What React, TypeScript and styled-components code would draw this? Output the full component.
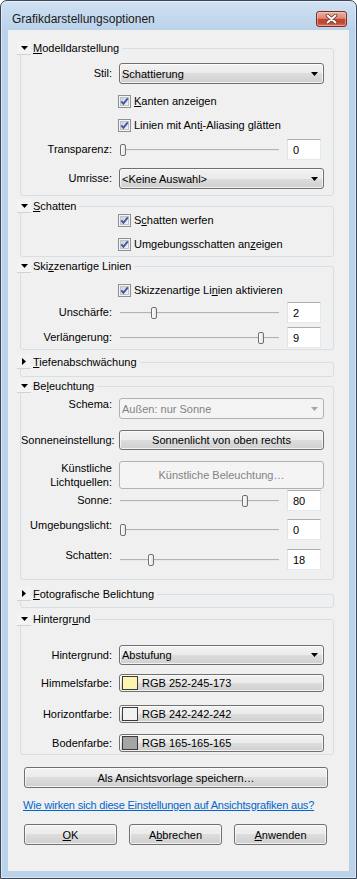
import React from "react";
import styled, { createGlobalStyle } from "styled-components";

const GlobalStyle = createGlobalStyle`
  html, body { margin: 0; padding: 0; background: #ffffff; }
  body {
    font-family: "Liberation Sans", Arial, sans-serif;
    font-size: 11px;
    color: #000;
  }
  * { box-sizing: border-box; }
`;

const Window = styled.div`
  width: 357px;
  height: 879px;
  border: 1px solid #3b4756;
  border-radius: 7px 7px 0 0;
  background: linear-gradient(#d0e1f2, #bad2ea 30px, #bad2ea);
  box-shadow: inset 0 0 0 1px rgba(255, 255, 255, 0.45);
  padding: 0 7px 7px 7px;
  display: flex;
  flex-direction: column;
`;

const TitleBar = styled.div`
  height: 29px;
  padding: 6px 2px 0 4px;
  display: flex;
  align-items: center;
  justify-content: space-between;
`;

const Title = styled.span`
  font-size: 12px;
  color: #1a1a1a;
`;

const CloseButton = styled.div`
  width: 31px;
  height: 16px;
  border: 1px solid #7a2e23;
  border-radius: 3px;
  background: linear-gradient(#eab3a3 0%, #d98873 45%, #c6462e 52%, #c24630 78%, #d87a62 100%);
  box-shadow: inset 0 0 0 1px rgba(255, 220, 210, 0.45);
  display: flex;
  align-items: center;
  justify-content: center;
`;

const Client = styled.div`
  flex: 1;
  background: #f0f0f0;
  padding: 11px 15px 0 9px;
  display: flex;
  flex-direction: column;
`;

const Section = styled.div<{ $mt: number }>`
  margin-top: ${(p) => p.$mt}px;
`;

const SectionHeader = styled.div`
  position: relative;
  z-index: 1;
  height: 14px;
  display: flex;
  align-items: center;
  gap: 2px;
`;

const Toggle = styled.div`
  width: 14px;
  height: 14px;
  background: #f3f3f3;
  border-bottom: 1px solid #d2d2d2;
  display: flex;
  align-items: center;
  justify-content: center;
`;

const HeaderLabel = styled.span`
  background: #f0f0f0;
  padding-right: 3px;
  line-height: 14px;
`;

const SectionBox = styled.div<{ $pb?: number; $min?: number }>`
  margin: -7px 0 0 3px;
  border: 1px solid #d5dfe5;
  border-radius: 3px;
  padding: 0 9px ${(p) => p.$pb ?? 0}px 0;
  min-height: ${(p) => (p.$min ? p.$min + 2 : 0)}px;
`;

const Row = styled.div<{ $mt: number; $h: number }>`
  display: grid;
  grid-template-columns: 91px 1fr;
  column-gap: 7px;
  align-items: center;
  height: ${(p) => p.$h}px;
  margin-top: ${(p) => p.$mt}px;
`;

const Label = styled.div<{ $align?: "start" | "center" }>`
  text-align: right;
  line-height: 13px;
  align-self: ${(p) => (p.$align === "start" ? "start" : "center")};
`;

const TwoLineLabel = styled(Label)`
  line-height: 14px;
`;

const Select = styled.div<{ $disabled?: boolean }>`
  grid-column: 2;
  height: 100%;
  border: 1px solid ${(p) => (p.$disabled ? "#adb2b5" : "#707070")};
  border-radius: 3px;
  background: ${(p) =>
    p.$disabled
      ? "#f4f4f4"
      : "linear-gradient(#f2f2f2 0%, #ebebeb 50%, #dddddd 50%, #cfcfcf 100%)"};
  box-shadow: ${(p) => (p.$disabled ? "none" : "inset 0 0 0 1px rgba(255,255,255,0.7)")};
  color: ${(p) => (p.$disabled ? "#838383" : "#000")};
  display: flex;
  align-items: center;
  justify-content: space-between;
  padding: 0 5px 0 2px;
`;

const PushButton = styled.div<{ $disabled?: boolean }>`
  height: 100%;
  border: 1px solid ${(p) => (p.$disabled ? "#adb2b5" : "#707070")};
  border-radius: 3px;
  background: ${(p) =>
    p.$disabled
      ? "#f4f4f4"
      : "linear-gradient(#f2f2f2 0%, #ebebeb 50%, #dddddd 50%, #cfcfcf 100%)"};
  box-shadow: ${(p) => (p.$disabled ? "none" : "inset 0 0 0 1px rgba(255,255,255,0.7)")};
  color: ${(p) => (p.$disabled ? "#838383" : "#000")};
  display: flex;
  align-items: center;
  justify-content: center;
`;

const ColorButton = styled(PushButton)`
  justify-content: flex-start;
  padding-left: 2px;
  gap: 4px;
`;

const Swatch = styled.div<{ $color: string }>`
  width: 16px;
  height: 14px;
  border: 1px solid #3a3a3a;
  background: ${(p) => p.$color};
`;

const CheckLine = styled.div`
  grid-column: 2;
  margin-left: -1px;
  display: flex;
  align-items: center;
  gap: 3px;
  line-height: 13px;
`;

const SliderControl = styled.div`
  height: 100%;
  display: flex;
  align-items: center;
  gap: 8px;
  padding: 0 3px 0 1px;
`;

const Track = styled.div`
  flex: 1;
  position: relative;
  height: 12px;
`;

const Rail = styled.div`
  position: absolute;
  left: 0;
  right: 0;
  top: 5px;
  height: 2px;
  border-top: 1px solid #b3b3b3;
  background: #e8e8e8;
`;

const Thumb = styled.div`
  position: absolute;
  top: 0;
  width: 6px;
  height: 12px;
  border: 1px solid #707070;
  border-radius: 2px;
  background: linear-gradient(90deg, #ffffff, #e2e2e2);
`;

const NumberBox = styled.div`
  width: 34px;
  height: 100%;
  background: #ffffff;
  border: 1px solid #e3e9ef;
  border-top-color: #abadb3;
  border-left-color: #e2e3ea;
  padding-left: 5px;
  display: flex;
  align-items: center;
`;

const SaveButton = styled(PushButton)`
  margin: 12px 0 0 7px;
  width: 304px;
  height: 21px;
`;

const HelpLink = styled.a`
  margin: 10px 0 0 6px;
  line-height: 14px;
  letter-spacing: -0.2px;
  color: #0066cc;
  text-decoration: underline;
  cursor: pointer;
`;

const ButtonBar = styled.div`
  margin: 12px 0 0 7px;
  display: flex;
  gap: 12px;
`;

const DialogButton = styled(PushButton)`
  width: 93px;
  height: 21px;
`;

const U = styled.span`
  text-decoration: underline;
`;

const DownArrow = ({ color = "#000" }: { color?: string }) => (
  <svg width="7" height="4" viewBox="0 0 7 4">
    <path d="M0 0H7L3.5 4Z" fill={color} />
  </svg>
);

const RightArrow = () => (
  <svg width="4" height="7" viewBox="0 0 4 7">
    <path d="M0 0L4 3.5L0 7Z" fill="#000" />
  </svg>
);

const CheckIcon = () => (
  <svg width="13" height="13" viewBox="0 0 13 13">
    <defs>
      <linearGradient id="cbg" x1="0" y1="0" x2="1" y2="1">
        <stop offset="0" stopColor="#c9cdd2" />
        <stop offset="1" stopColor="#f6f6f6" />
      </linearGradient>
    </defs>
    <rect x="0.5" y="0.5" width="12" height="12" fill="#f4f4f4" stroke="#8e8f8f" />
    <rect x="2.5" y="2.5" width="8" height="8" fill="url(#cbg)" stroke="#c0c4c8" />
    <path d="M3.3 6.4L5.4 8.8L9.8 3.4" fill="none" stroke="#3a56a4" strokeWidth="1.9" />
  </svg>
);

const CloseIcon = () => (
  <svg width="13" height="10" viewBox="0 0 13 10">
    <path d="M2.5 1.5L10.5 8.5M10.5 1.5L2.5 8.5" stroke="#5a3a34" strokeWidth="3.6" strokeLinecap="round" />
    <path d="M2.5 1.5L10.5 8.5M10.5 1.5L2.5 8.5" stroke="#ffffff" strokeWidth="2" strokeLinecap="round" />
  </svg>
);

type HeaderProps = { open: boolean; children: React.ReactNode };
const Header = ({ open, children }: HeaderProps) => (
  <SectionHeader>
    <Toggle>{open ? <DownArrow /> : <RightArrow />}</Toggle>
    <HeaderLabel>{children}</HeaderLabel>
  </SectionHeader>
);

type SliderProps = {
  mt: number;
  label: string;
  value: number;
  max: number;
  align?: "start" | "center";
};
// track runs 159px, the thumb 6px: thumb left = value share of 153px
const SliderRow = ({ mt, label, value, max, align }: SliderProps) => (
  <Row $mt={mt} $h={21}>
    <Label $align={align}>{label}</Label>
    <SliderControl>
      <Track>
        <Rail />
        <Thumb style={{ left: Math.round((value / max) * 153) }} />
      </Track>
      <NumberBox>{value}</NumberBox>
    </SliderControl>
  </Row>
);

const Check = ({ mt, children }: { mt: number; children: React.ReactNode }) => (
  <Row $mt={mt} $h={13}>
    <CheckLine>
      <CheckIcon />
      <span>{children}</span>
    </CheckLine>
  </Row>
);

const colors = [
  { label: "Himmelsfarbe:", rgb: [252, 245, 173], mt: 9 },
  { label: "Horizontfarbe:", rgb: [242, 242, 242], mt: 13 },
  { label: "Bodenfarbe:", rgb: [165, 165, 165], mt: 11 },
];

const App = () => (
  <>
    <GlobalStyle />
    <Window>
      <TitleBar>
        <Title>Grafikdarstellungsoptionen</Title>
        <CloseButton>
          <CloseIcon />
        </CloseButton>
      </TitleBar>
      <Client>
        <Section $mt={0}>
          <Header open>
            <U>M</U>odelldarstellung
          </Header>
          <SectionBox $pb={6}>
            <Row $mt={14} $h={21}>
              <Label>Stil:</Label>
              <Select>
                <span>Schattierung</span>
                <DownArrow />
              </Select>
            </Row>
            <Check mt={11}>
              <U>K</U>anten anzeigen
            </Check>
            <Check mt={11}>
              Linien mit Ant<U>i</U>-Aliasing glätten
            </Check>
            <SliderRow mt={7} label="Transparenz:" value={0} max={100} />
            <Row $mt={8} $h={21}>
              <Label>Umrisse:</Label>
              <Select>
                <span>&lt;Keine Auswahl&gt;</span>
                <DownArrow />
              </Select>
            </Row>
          </SectionBox>
        </Section>

        <Section $mt={3}>
          <Header open>
            <U>S</U>chatten
          </Header>
          <SectionBox $pb={5}>
            <Check mt={7}>
              S<U>c</U>hatten werfen
            </Check>
            <Check mt={11}>
              Umgebungsschatten an<U>z</U>eigen
            </Check>
          </SectionBox>
        </Section>

        <Section $mt={2}>
          <Header open>
            Ski<U>z</U>zenartige Linien
          </Header>
          <SectionBox $pb={1}>
            <Check mt={17}>
              Skizzenartige Li<U>n</U>ien aktivieren
            </Check>
            <SliderRow mt={5} label="Unschärfe:" value={2} max={10} />
            <SliderRow mt={4} label="Verlängerung:" value={9} max={10} />
          </SectionBox>
        </Section>

        <Section $mt={5}>
          <Header open={false}>
            <U>T</U>iefenabschwächung
          </Header>
          <SectionBox $min={13} />
        </Section>

        <Section $mt={2}>
          <Header open>
            Be<U>l</U>euchtung
          </Header>
          <SectionBox $pb={9}>
            <Row $mt={11} $h={21}>
              <Label $align="start">Schema:</Label>
              <Select $disabled>
                <span>Außen: nur Sonne</span>
                <DownArrow color="#a6a6a6" />
              </Select>
            </Row>
            <Row $mt={11} $h={20}>
              <Label>Sonneneinstellung:</Label>
              <PushButton>Sonnenlicht von oben rechts</PushButton>
            </Row>
            <Row $mt={11} $h={20}>
              <TwoLineLabel>
                Künstliche
                <br />
                Lichtquellen:
              </TwoLineLabel>
              <PushButton $disabled>Künstliche Beleuchtung…</PushButton>
            </Row>
            <SliderRow mt={9} label="Sonne:" value={80} max={100} />
            <SliderRow mt={8} label="Umgebungslicht:" value={0} max={100} align="start" />
            <SliderRow mt={9} label="Schatten:" value={18} max={100} align="start" />
          </SectionBox>
        </Section>

        <Section $mt={7}>
          <Header open={false}>
            <U>F</U>otografische Belichtung
          </Header>
          <SectionBox $min={12} />
        </Section>

        <Section $mt={4}>
          <Header open>
            Hintergr<U>u</U>nd
          </Header>
          <SectionBox $pb={2}>
            <Row $mt={25} $h={20}>
              <Label>Hintergrund:</Label>
              <Select>
                <span>Abstufung</span>
                <DownArrow />
              </Select>
            </Row>
            {colors.map((c) => (
              <Row key={c.label} $mt={c.mt} $h={18}>
                <Label>{c.label}</Label>
                <ColorButton>
                  <Swatch $color={`rgb(${c.rgb.join(",")})`} />
                  <span>RGB {c.rgb.join("-")}</span>
                </ColorButton>
              </Row>
            ))}
          </SectionBox>
        </Section>

        <SaveButton>Als Ansichtsvorlage speichern…</SaveButton>
        <HelpLink>Wie wirken sich diese Einstellungen auf Ansichtsgrafiken aus?</HelpLink>
        <ButtonBar>
          <DialogButton>
            <U>O</U>K
          </DialogButton>
          <DialogButton>
            A<U>b</U>brechen
          </DialogButton>
          <DialogButton>
            <U>A</U>nwenden
          </DialogButton>
        </ButtonBar>
      </Client>
    </Window>
  </>
);

export default App;
